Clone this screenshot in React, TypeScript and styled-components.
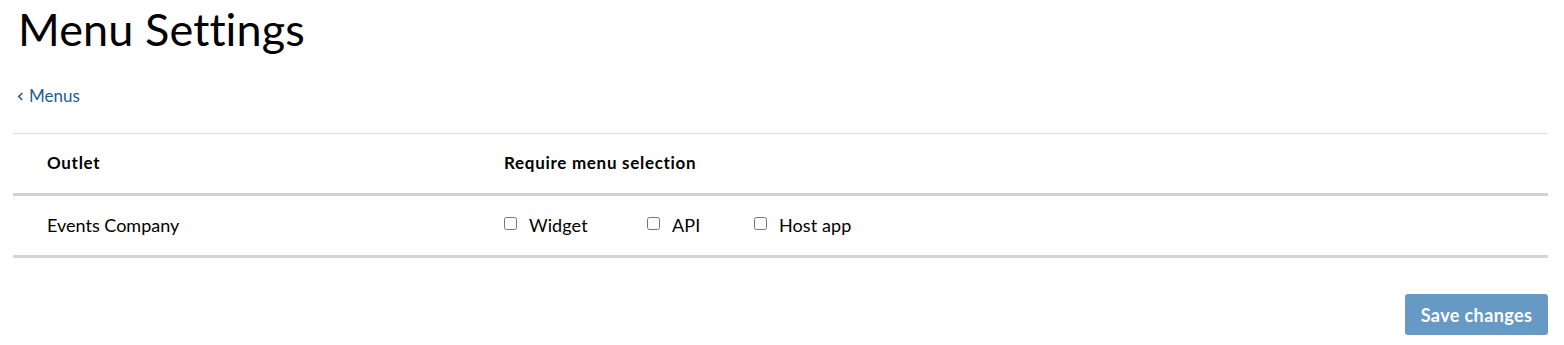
import styled, { createGlobalStyle } from "styled-components";

const GlobalStyle = createGlobalStyle`
  html, body {
    margin: 0;
    padding: 0;
    background: #ffffff;
  }
  body {
    font-family: Lato, "Open Sans", Arial, sans-serif;
    color: #000000;
  }
`;

interface Channel {
  label: string;
  width?: number;
}

interface OutletRow {
  name: string;
  channels: Channel[];
}

const rows: OutletRow[] = [
  {
    name: "Events Company",
    channels: [
      { label: "Widget", width: 143 },
      { label: "API", width: 107 },
      { label: "Host app" },
    ],
  },
];

const App = () => {
  return (
    <>
      <GlobalStyle />
      <Page>
        <Title>Menu Settings</Title>
        <BackLink href="#">
          <Chevron viewBox="0 0 8 12" width={7} height={11}>
            <path d="M6 2 L2 6 L6 10" fill="none" stroke="currentColor" strokeWidth="1.8" />
          </Chevron>
          Menus
        </BackLink>
        <Table>
          <thead>
            <tr>
              <HeadCell $width={457}>Outlet</HeadCell>
              <HeadCell>Require menu selection</HeadCell>
            </tr>
          </thead>
          <tbody>
            {rows.map((row) => (
              <tr key={row.name}>
                <BodyCell>{row.name}</BodyCell>
                <BodyCell>
                  <Options>
                    {row.channels.map((ch) => (
                      <Option key={ch.label} $width={ch.width}>
                        <Checkbox type="checkbox" />
                        {ch.label}
                      </Option>
                    ))}
                  </Options>
                </BodyCell>
              </tr>
            ))}
          </tbody>
        </Table>
        <Footer>
          <SaveButton type="button">Save changes</SaveButton>
        </Footer>
      </Page>
    </>
  );
};

export default App;

const Page = styled.div`
  padding: 0 16px 10px 13px;
`;

const Title = styled.h1`
  margin: 0;
  padding: 3px 0 0 5px;
  font-size: 45px;
  font-weight: 400;
  line-height: 52px;
  letter-spacing: 0.1px;
`;

const BackLink = styled.a`
  display: inline-flex;
  align-items: center;
  gap: 5px;
  margin: 30px 0 0 4px;
  color: #1d5d95;
  font-size: 17px;
  line-height: 22px;
  text-decoration: none;
`;

const Chevron = styled.svg`
  display: block;
`;

const Table = styled.table`
  width: 100%;
  margin-top: 26px;
  border-collapse: collapse;
  border-top: 1px solid #dddddd;
`;

const HeadCell = styled.th<{ $width?: number }>`
  width: ${({ $width }) => ($width ? `${$width}px` : "auto")};
  height: 57px;
  padding: 0 0 2px 34px;
  text-align: left;
  font-size: 17px;
  font-weight: 700;
  letter-spacing: 0.7px;
  border-bottom: 3px solid #d3d3d3;
  &:last-child {
    padding-left: 0;
  }
`;

const BodyCell = styled.td`
  height: 57px;
  padding: 0 0 2px 34px;
  font-size: 18px;
  border-bottom: 3px solid #d3d3d3;
  &:last-child {
    padding-left: 0;
  }
`;

const Options = styled.div`
  display: flex;
  align-items: center;
`;

const Option = styled.label<{ $width?: number }>`
  display: inline-flex;
  align-items: center;
  width: ${({ $width }) => ($width ? `${$width}px` : "auto")};
  font-size: 18px;
  letter-spacing: 0.1px;
`;

const Checkbox = styled.input`
  width: 13px;
  height: 13px;
  margin: 0 12px 3px 0;
`;

const Footer = styled.div`
  display: flex;
  justify-content: flex-end;
  margin-top: 36px;
`;

const SaveButton = styled.button`
  width: 143px;
  height: 41px;
  border: none;
  border-radius: 3px;
  background: #6699c4;
  color: #ffffff;
  font-family: Lato, "Open Sans", Arial, sans-serif;
  font-size: 18px;
  font-weight: 700;
  letter-spacing: 0.4px;
  cursor: pointer;
`;
